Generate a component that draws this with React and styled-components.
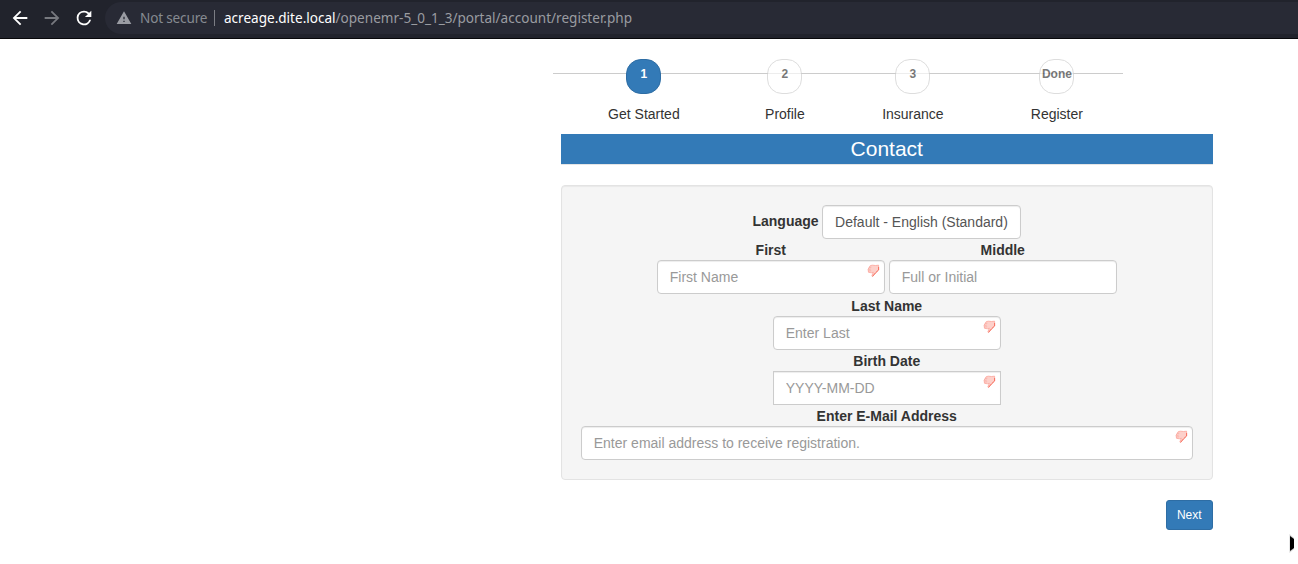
import React from 'react';
import styled, { createGlobalStyle } from 'styled-components';

const GlobalStyle = createGlobalStyle`
  *, *::before, *::after { box-sizing: border-box; }
  body {
    margin: 0;
    background: #fff;
    color: #333;
    font: 14px/20px "Liberation Sans", Arial, sans-serif;
    overflow: hidden;
  }
`;

const Screen = styled.div`
  position: relative;
  height: 564px;
  overflow: hidden;
`;

const BrowserBar = styled.header`
  display: flex;
  align-items: flex-start;
  height: 39px;
  padding-top: 2px;
  background: #21232c;
  border-bottom: 1px solid #08080b;
`;

const NavButtons = styled.nav`
  display: flex;
  gap: 10px;
  width: 105px;
  padding: 5px 0 0 9px;
  svg { display: block; flex: none; }
`;

const AddressBar = styled.div`
  display: flex;
  align-items: center;
  flex: 1;
  height: 32px;
  padding-left: 11px;
  border-radius: 16px 0 0 16px;
  background: #282a35;
  color: #9a9ca1;
  font: 13.55px/20px "Noto Sans", sans-serif;
  white-space: pre;
`;

const SecurityLabel = styled.span`
  width: 67px;
  margin-left: 8px;
  color: #868a91;
  letter-spacing: -0.16px;
`;

const Separator = styled.span`
  width: 1px;
  height: 16px;
  margin: 0 9px 0 7px;
  background: #7b7d84;
`;

const Host = styled.span`
  color: #fff;
`;

const Page = styled.main`
  width: 660px;
  margin-left: 553px;
  padding-top: 20px;
`;

const Steps = styled.div`
  display: flex;
  width: 570px;
  height: 75px;
  margin-left: 0.4px;
  background: linear-gradient(#ccc, #ccc) 0 14px / 100% 1px no-repeat;
`;

const Step = styled.div`
  display: flex;
  flex-direction: column;
  align-items: center;
  gap: 10px;
  width: ${(p) => p.$width}px;
`;

const StepCircle = styled.div`
  width: 35px;
  height: 35px;
  padding: 6px 0;
  border: 1px solid ${(p) => (p.$active ? '#2e6da4' : '#ccc')};
  border-radius: 15px;
  background: ${(p) => (p.$active ? '#337ab7' : '#fff')};
  color: ${(p) => (p.$active ? '#fff' : '#333')};
  opacity: ${(p) => (p.$active ? 1 : 0.65)};
  font-size: 12px;
  font-weight: bold;
  line-height: 17px;
  text-align: center;
`;

const Form = styled.form`
  display: flex;
  flex-direction: column;
  width: 652px;
  margin-left: 7.75px;
`;

const Legend = styled.h2`
  margin: 0 0 20px;
  border-bottom: 1px solid #e5e5e5;
  background: #337ab7;
  background-clip: padding-box;
  color: #fff;
  font-size: 21px;
  font-weight: normal;
  line-height: 30px;
  text-align: center;
`;

const Well = styled.section`
  display: flex;
  flex-direction: column;
  align-items: center;
  height: 295px;
  padding: 19px;
  border: 1px solid #e3e3e3;
  border-radius: 4px;
  background: #f5f5f5;
  box-shadow: inset 0 1px 1px rgba(0, 0, 0, 0.05);
`;

const Row = styled.div`
  display: flex;
  gap: ${(p) => p.$gap || 4}px;
  width: ${(p) => (p.$wide ? '100%' : 'auto')};
  margin-bottom: ${(p) => p.$after || 0}px;
`;

const Field = styled.label`
  display: flex;
  flex-direction: column;
  align-items: center;
  width: ${(p) => (p.$wide ? '100%' : '228px')};
  font-weight: bold;
`;

const LanguageLabel = styled.label`
  padding-top: 6px;
  font-weight: bold;
`;

const controlBox = `
  height: 34px;
  border: 1px solid #ccc;
  background: #fff;
  box-shadow: inset 0 1px 1px rgba(0, 0, 0, 0.075);
`;

const Select = styled.div`
  ${controlBox}
  width: 199px;
  padding: 6px 12px;
  border-radius: 4px;
  color: #555;
  white-space: nowrap;
`;

const InputBox = styled.span`
  ${controlBox}
  display: flex;
  justify-content: space-between;
  width: 100%;
  padding: 0 4px 0 12px;
  border-radius: ${(p) => (p.$square ? 0 : 4)}px;
  svg { flex: none; margin-top: 3px; }
`;

const Input = styled.input`
  flex: 1;
  min-width: 0;
  padding: 0;
  border: 0;
  outline: 0;
  background: transparent;
  color: #555;
  font: inherit;
  font-weight: normal;
  &::placeholder { color: #999; opacity: 1; }
`;

const NextButton = styled.button`
  align-self: flex-end;
  width: 47px;
  height: 30px;
  margin-top: 20px;
  padding: 0;
  border: 1px solid #2e6da4;
  border-radius: 3px;
  background: #337ab7;
  color: #fff;
  font: 12px/18px "Liberation Sans", Arial, sans-serif;
`;

const Pointer = styled.svg`
  position: absolute;
  left: 1289px;
  top: 533px;
`;

const NavIcon = ({ d, color }) => (
  <svg width="22" height="22" viewBox="0 0 24 24" fill={color}>
    <path d={d} />
  </svg>
);

const ThumbDown = () => (
  <svg width="13" height="14" viewBox="0 0 13 14">
    <path
      d="M3.2 1.7 5.2 1.2 8.5 1.5 11.6 1.2V6L8.6 8.8 5.6 12.5 4.9 11.8 6.3 8.2 4.4 8.8 1.5 8.3 1.1 5.2Z"
      fill="#fdd0ca"
      stroke="#fba59b"
      strokeWidth=".8"
      strokeLinejoin="round"
    />
    <path d="M11.6 3V6L8.6 8.8 5.5 12.4" fill="none" stroke="#f8705f" strokeWidth="1" />
    <path d="M1.4 5.4 3.8 5.1M2.2 3.5 4.4 3.2M1.5 7 4.2 6.8" stroke="#f9a095" strokeWidth=".6" />
  </svg>
);

const steps = [
  { mark: '1', name: 'Get Started', width: 181, active: true },
  { mark: '2', name: 'Profile', width: 101 },
  { mark: '3', name: 'Insurance', width: 155 },
  { mark: 'Done', name: 'Register', width: 133 },
];

const TextField = ({ label, hint, required, square, wide }) => (
  <Field $wide={wide}>
    {label}
    <InputBox $square={square}>
      <Input placeholder={hint} />
      {required && <ThumbDown />}
    </InputBox>
  </Field>
);

export default function App() {
  return (
    <Screen>
      <GlobalStyle />
      <BrowserBar>
        <NavButtons>
          <NavIcon color="#fff" d="M20 11H7.83l5.59-5.59L12 4l-8 8 8 8 1.41-1.41L7.83 13H20v-2z" />
          <NavIcon color="#77797f" d="M12 4l-1.41 1.41L16.17 11H4v2h12.17l-5.58 5.59L12 20l8-8z" />
          <NavIcon
            color="#fff"
            d="M17.65 6.35A7.958 7.958 0 0 0 12 4a8 8 0 1 0 7.73 10h-2.08A6 6 0 1 1 12 6c1.66 0 3.14.69 4.22 1.78L13 11h7V4l-2.35 2.35z"
          />
        </NavButtons>
        <AddressBar>
          <svg width="16" height="16" viewBox="0 0 24 24" fill="#9a9ca3">
            <path d="M1 21h22L12 2 1 21zm12-3h-2v-2h2v2zm0-4h-2v-4h2v4z" />
          </svg>
          <SecurityLabel>Not secure</SecurityLabel>
          <Separator />
          <Host>acreage.dite.local</Host>
          <span>/openemr-5_0_1_3/portal/account/register.php</span>
        </AddressBar>
      </BrowserBar>
      <Page>
        <Steps>
          {steps.map((s) => (
            <Step key={s.name} $width={s.width}>
              <StepCircle $active={s.active}>{s.mark}</StepCircle>
              <span>{s.name}</span>
            </Step>
          ))}
        </Steps>
        <Form>
          <Legend>Contact</Legend>
          <Well>
            <Row $after={1} $gap={3.5}>
              <LanguageLabel>Language</LanguageLabel>
              <Select>Default - English (Standard)</Select>
            </Row>
            <Row $after={2}>
              <TextField label="First" hint="First Name" required />
              <TextField label="Middle" hint="Full or Initial" />
            </Row>
            <Row $after={1}>
              <TextField label="Last Name" hint="Enter Last" required />
            </Row>
            <Row $after={1}>
              <TextField label="Birth Date" hint="YYYY-MM-DD" required square />
            </Row>
            <Row $wide>
              <TextField label="Enter E-Mail Address" hint="Enter email address to receive registration." required wide />
            </Row>
          </Well>
          <NextButton type="button">Next</NextButton>
        </Form>
      </Page>
      <Pointer width="5" height="21" viewBox="0 0 5 21">
        <path d="M.5 1v19L5 16V5Z" fill="#d4d4d4" />
        <path d="M1 3v15l4-3V6Z" fill="#000" />
      </Pointer>
    </Screen>
  );
}
